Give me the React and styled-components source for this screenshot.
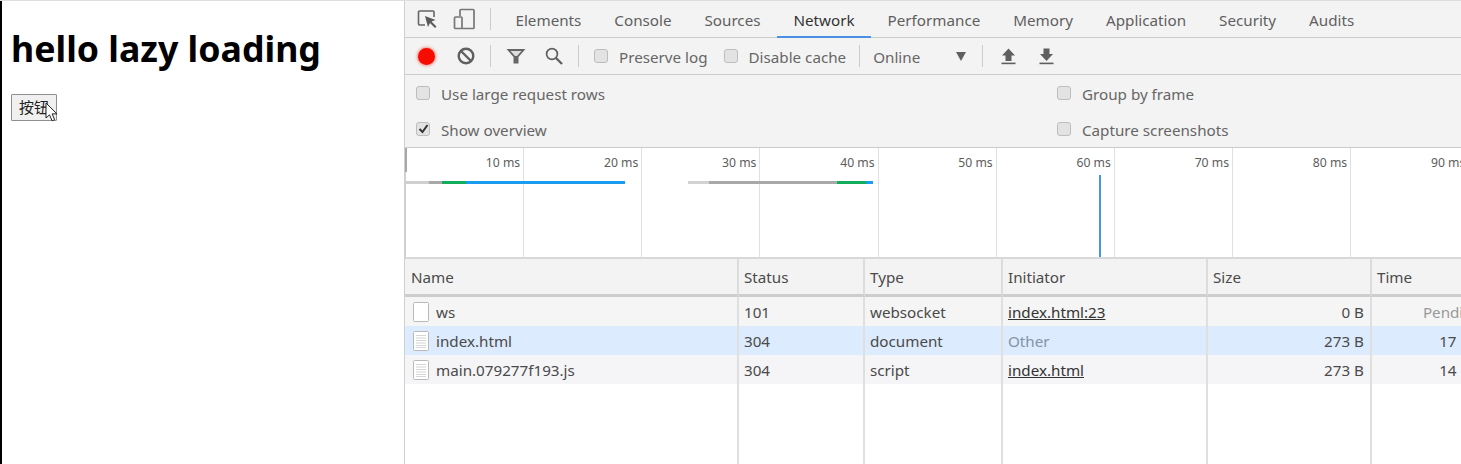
import React from 'react';
import styled, { createGlobalStyle } from 'styled-components';

const Global = createGlobalStyle`
  html, body {
    margin: 0;
    padding: 0;
    background: #fff;
    overflow: hidden;
  }
  * { box-sizing: border-box; }
`;

const FONT = '"Noto Sans", "Noto Sans CJK SC", sans-serif';

const Screen = styled.div`
  display: flex;
  width: 1461px;
  height: 464px;
  overflow: hidden;
  font-family: ${FONT};
  border-top: 1px solid #dedede;
`;

const Page = styled.div`
  position: relative;
  flex: 0 0 404px;
  padding: 23px 0 0 9px;
  border-left: 2px solid #000;
`;

const Heading = styled.h1`
  margin: 0 0 22px;
  font-size: 35.7px;
  line-height: 48px;
  font-weight: 700;
  color: #000;
`;

const PageButton = styled.button`
  display: block;
  width: 46px;
  height: 27px;
  padding: 0;
  background: #f0f0f0;
  border: 1px solid #8f8f8f;
  border-radius: 1px;
  font-family: ${FONT};
  font-size: 15px;
  line-height: 25px;
  color: #222;
`;

const Cursor = styled.svg`
  position: absolute;
  left: 43px;
  top: 101px;
`;

const Tools = styled.div`
  flex: 1;
  min-width: 0;
  display: flex;
  flex-direction: column;
  border-left: 1px solid #cfcfcf;
  color: #5a5a5a;
`;

const TabBar = styled.div`
  display: flex;
  align-items: center;
  height: 37px;
  flex: none;
  background: #f3f3f3;
  border-bottom: 1px solid #ccc;
`;

const IconSlot = styled.div`
  display: flex;
  align-items: center;
  justify-content: center;
  flex: none;
  width: ${(p) => p.$w}px;
  height: 100%;
`;

const Divider = styled.span`
  flex: none;
  width: 1px;
  height: 22px;
  background: #ccc;
`;

const Tab = styled.div`
  display: flex;
  align-items: center;
  height: 37px;
  padding: 2px 16.5px 0;
  font-size: 15.2px;
  white-space: nowrap;
  color: ${(p) => (p.$active ? '#333' : '#5f5f5f')};
  border-bottom: 2px solid ${(p) => (p.$active ? '#4a8fe0' : 'transparent')};
  margin-bottom: -1px;
`;

const Toolbar = styled.div`
  display: flex;
  align-items: center;
  height: 37px;
  flex: none;
  background: #f3f3f3;
  border-bottom: 1px solid #ccc;
`;

const Record = styled.span`
  width: 17px;
  height: 17px;
  border-radius: 50%;
  background: #f60c00;
  box-shadow: 0 0 3px 1px rgba(246, 40, 20, 0.5);
`;

const Box = styled.span`
  display: flex;
  align-items: center;
  justify-content: center;
  flex: none;
  width: 14px;
  height: 14px;
  margin-top: -3px;
  background: #e3e3e3;
  border: 1px solid #bdbdbd;
  border-radius: 3px;
`;

const Check = styled.label`
  display: flex;
  align-items: center;
  gap: 11px;
  padding-top: 2px;
  font-size: 15.2px;
  white-space: nowrap;
  color: #666;
`;

const ThrottleLabel = styled.span`
  flex: none;
  width: 83px;
  padding-top: 2px;
  font-size: 15.2px;
  color: #666;
`;

const Arrow = styled.span`
  flex: none;
  width: 0;
  height: 0;
  border-left: 5.5px solid transparent;
  border-right: 5.5px solid transparent;
  border-top: 9px solid #5f5f5f;
`;

const Options = styled.div`
  display: grid;
  grid-template-columns: 641px 1fr;
  grid-auto-rows: 36px;
  height: 73px;
  flex: none;
  padding-left: 11px;
  background: #f3f3f3;
  border-bottom: 1px solid #ccc;
`;

const Overview = styled.div`
  position: relative;
  display: flex;
  height: 111px;
  flex: none;
  overflow: hidden;
  padding-left: 1px;
  background: #fff;
  border-bottom: 2px solid #d8d8d8;
`;

const Handle = styled.span`
  position: absolute;
  left: 0;
  top: 0;
  width: 2px;
  height: 24px;
  background: #a8a8a8;
`;

const LeftEdge = styled.span`
  position: absolute;
  left: 0;
  top: 0;
  bottom: 0;
  width: 1px;
  background: #d0d0d0;
`;

const Tick = styled.div`
  flex: none;
  width: 118.15px;
  padding: 6px 3px 0 0;
  text-align: right;
  font-size: 12.2px;
  line-height: 18px;
  white-space: nowrap;
  color: #5c5c5c;
  border-right: 1px solid #e0e0e0;
`;

const Bar = styled.span`
  position: absolute;
  top: 33px;
  height: 3px;
  background: ${(p) => p.$color};
`;

const Marker = styled.span`
  position: absolute;
  left: 694px;
  top: 27px;
  bottom: 0;
  width: 2px;
  background: #4a96dc;
`;

const Table = styled.div`
  flex: 1;
  display: grid;
  grid-template-columns: 334px 126px 138px 205px 164px 116px;
  grid-template-rows: 38px 29px 29px 29px 1fr;
  width: 1083px;
  font-size: 15.2px;
`;

const Head = styled.div`
  display: flex;
  align-items: center;
  padding-left: ${(p) => (p.$first ? 6 : 5)}px;
  background: #f3f3f3;
  color: #4a4a4a;
  border-right: 2px solid #dcdcdc;
  border-bottom: 3px solid #cdcdcd;
  ${(p) => p.$last && 'border-right: 0;'}
`;

const Cell = styled.div`
  display: flex;
  align-items: center;
  justify-content: ${(p) => (p.$right ? 'flex-end' : 'flex-start')};
  gap: 7px;
  padding: ${(p) => (p.$right ? '0 6px 0 0' : p.$first ? '0 0 0 8px' : '0 0 0 5px')};
  white-space: nowrap;
  overflow: hidden;
  background: ${(p) => p.$bg || 'transparent'};
  color: ${(p) => p.$color || '#4a4a4a'};
  border-right: 2px solid #dfdfdf;
  ${(p) => p.$last && 'border-right: 0;'}
`;

const Link = styled.span`
  color: #333;
  text-decoration: underline;
`;

const InspectIcon = () => (
  <svg width="20" height="20" viewBox="0 0 20 20" fill="none">
    <path d="M8 16H2.5a1 1 0 0 1-1-1V3a1 1 0 0 1 1-1H16a1 1 0 0 1 1 1v5" stroke="#666" strokeWidth="1.6" />
    <path d="M8 7l3 11 2-4 5 5 1.5-1.5-5-5 4-1.5z" fill="#5a5a5a" />
  </svg>
);

const DeviceIcon = () => (
  <svg width="22" height="22" viewBox="0 0 22 22" fill="none" stroke="#777" strokeWidth="1.7">
    <path d="M7 8V2.5a1 1 0 0 1 1-1h12a1 1 0 0 1 1 1v17a1 1 0 0 1-1 1H9" />
    <rect x="1.5" y="9" width="7.5" height="11.5" rx="1" />
  </svg>
);

const ClearIcon = () => (
  <svg width="18" height="18" viewBox="0 0 18 18" fill="none" stroke="#5f5f5f" strokeWidth="2.4">
    <circle cx="9" cy="9" r="7.3" />
    <path d="M4 4l10 10" />
  </svg>
);

const FilterIcon = () => (
  <svg width="20" height="16" viewBox="0 0 20 16">
    <path d="M0.5 1h19L12.5 9v6.5h-5V9z" fill="#666" />
    <path d="M4.5 3h11L11 8H9z" fill="#ddd" />
  </svg>
);

const SearchIcon = () => (
  <svg width="18" height="18" viewBox="0 0 18 18" fill="none" stroke="#5f5f5f">
    <circle cx="7" cy="7" r="5.4" strokeWidth="1.7" />
    <path d="M11 11l6 6" strokeWidth="2.3" />
  </svg>
);

const UploadIcon = () => (
  <svg width="15" height="17" viewBox="0 0 15 17" fill="#5f5f5f">
    <path d="M7.5 0.5L14 7.5h-3.5V13h-6V7.5H1z" />
    <rect x="0.5" y="14.6" width="14" height="1.6" />
  </svg>
);

const DownloadIcon = () => (
  <svg width="15" height="17" viewBox="0 0 15 17" fill="#5f5f5f">
    <path d="M4.5 0.5h6V6H14l-6.5 7L1 6h3.5z" />
    <rect x="0.5" y="14.6" width="14" height="1.6" />
  </svg>
);

const TickMark = () => (
  <svg width="11" height="10" viewBox="0 0 11 10" fill="none" stroke="#333" strokeWidth="2">
    <path d="M1.5 5l3 3 5-7" />
  </svg>
);

const FileIcon = ({ lines }) => (
  <svg width="16" height="20" viewBox="0 0 16 20">
    <rect x="0.5" y="0.5" width="15" height="19" rx="1" fill="#fff" stroke="#b9b9b9" />
    {lines && [4, 6.5, 9, 11.5, 14, 16].map((y) => (
      <rect key={y} x="3" y={y} width="10" height="1" fill="#d6d6d6" />
    ))}
  </svg>
);

const tabs = ['Elements', 'Console', 'Sources', 'Network', 'Performance', 'Memory', 'Application', 'Security', 'Audits'];
const ticks = [10, 20, 30, 40, 50, 60, 70, 80, 90];
const bars = [
  [0, 24, '#cfcfcf'], [24, 13, '#a9a9a9'], [37, 24, '#12ad5b'], [61, 159, '#1a9cf0'],
  [283, 21, '#d2d2d2'], [304, 128, '#a9a9a9'], [432, 29, '#12ad5b'], [461, 7, '#1a9cf0'],
];
const heads = ['Name', 'Status', 'Type', 'Initiator', 'Size', 'Time'];
const rows = [
  { name: 'ws', status: '101', type: 'websocket', initiator: 'index.html:23', size: '0 B', time: 'Pending', bg: '#f5f5f5' },
  { name: 'index.html', status: '304', type: 'document', initiator: 'Other', size: '273 B', time: '17 ms', bg: '#dcebfd', lines: true },
  { name: 'main.079277f193.js', status: '304', type: 'script', initiator: 'index.html', size: '273 B', time: '14 ms', bg: '#f5f4f6', lines: true },
];

const App = () => (
  <Screen>
    <Global />
    <Page>
      <Heading>hello lazy loading</Heading>
      <PageButton>按钮</PageButton>
      <Cursor width="14" height="20" viewBox="0 0 14 20">
        <path d="M1 1v15l3.5-3.2 2.6 6 2.6-1.1-2.6-5.8H12z" fill="#fff" stroke="#222" strokeWidth="1" />
      </Cursor>
    </Page>
    <Tools>
      <TabBar>
        <IconSlot $w={44}><InspectIcon /></IconSlot>
        <IconSlot $w={30}><DeviceIcon /></IconSlot>
        <IconSlot $w={11} />
        <Divider />
        <IconSlot $w={8} />
        {tabs.map((t) => <Tab key={t} $active={t === 'Network'}>{t}</Tab>)}
      </TabBar>
      <Toolbar>
        <IconSlot $w={43}><Record /></IconSlot>
        <IconSlot $w={35}><ClearIcon /></IconSlot>
        <IconSlot $w={7} />
        <Divider />
        <IconSlot $w={49}><FilterIcon /></IconSlot>
        <IconSlot $w={28}><SearchIcon /></IconSlot>
        <IconSlot $w={10} />
        <Divider />
        <IconSlot $w={15} />
        <Check><Box />Preserve log</Check>
        <IconSlot $w={16} />
        <Check><Box />Disable cache</Check>
        <IconSlot $w={13} />
        <Divider />
        <IconSlot $w={13} />
        <ThrottleLabel>Online</ThrottleLabel>
        <Arrow />
        <IconSlot $w={16} />
        <Divider />
        <IconSlot $w={50}><UploadIcon /></IconSlot>
        <IconSlot $w={27}><DownloadIcon /></IconSlot>
      </Toolbar>
      <Options>
        <Check><Box />Use large request rows</Check>
        <Check><Box />Group by frame</Check>
        <Check><Box><TickMark /></Box>Show overview</Check>
        <Check><Box />Capture screenshots</Check>
      </Options>
      <Overview>
        {ticks.map((t) => <Tick key={t}>{t} ms</Tick>)}
        <LeftEdge />
        <Handle />
        {bars.map(([left, width, color]) => (
          <Bar key={left} $color={color} style={{ left, width }} />
        ))}
        <Marker />
      </Overview>
      <Table>
        {heads.map((h, i) => <Head key={h} $first={i === 0} $last={i === 5}>{h}</Head>)}
        {rows.map((r) => (
          <React.Fragment key={r.name}>
            <Cell $bg={r.bg} $first><FileIcon lines={r.lines} />{r.name}</Cell>
            <Cell $bg={r.bg}>{r.status}</Cell>
            <Cell $bg={r.bg}>{r.type}</Cell>
            <Cell $bg={r.bg} $color={r.initiator === 'Other' ? '#8493a8' : undefined}>
              {r.initiator === 'Other' ? r.initiator : <Link>{r.initiator}</Link>}
            </Cell>
            <Cell $bg={r.bg} $right>{r.size}</Cell>
            <Cell $bg={r.bg} $right $last $color={r.time === 'Pending' ? '#999' : undefined}>{r.time}</Cell>
          </React.Fragment>
        ))}
        {heads.map((h, i) => <Cell key={h} $last={i === 5} />)}
      </Table>
    </Tools>
  </Screen>
);

export default App;
